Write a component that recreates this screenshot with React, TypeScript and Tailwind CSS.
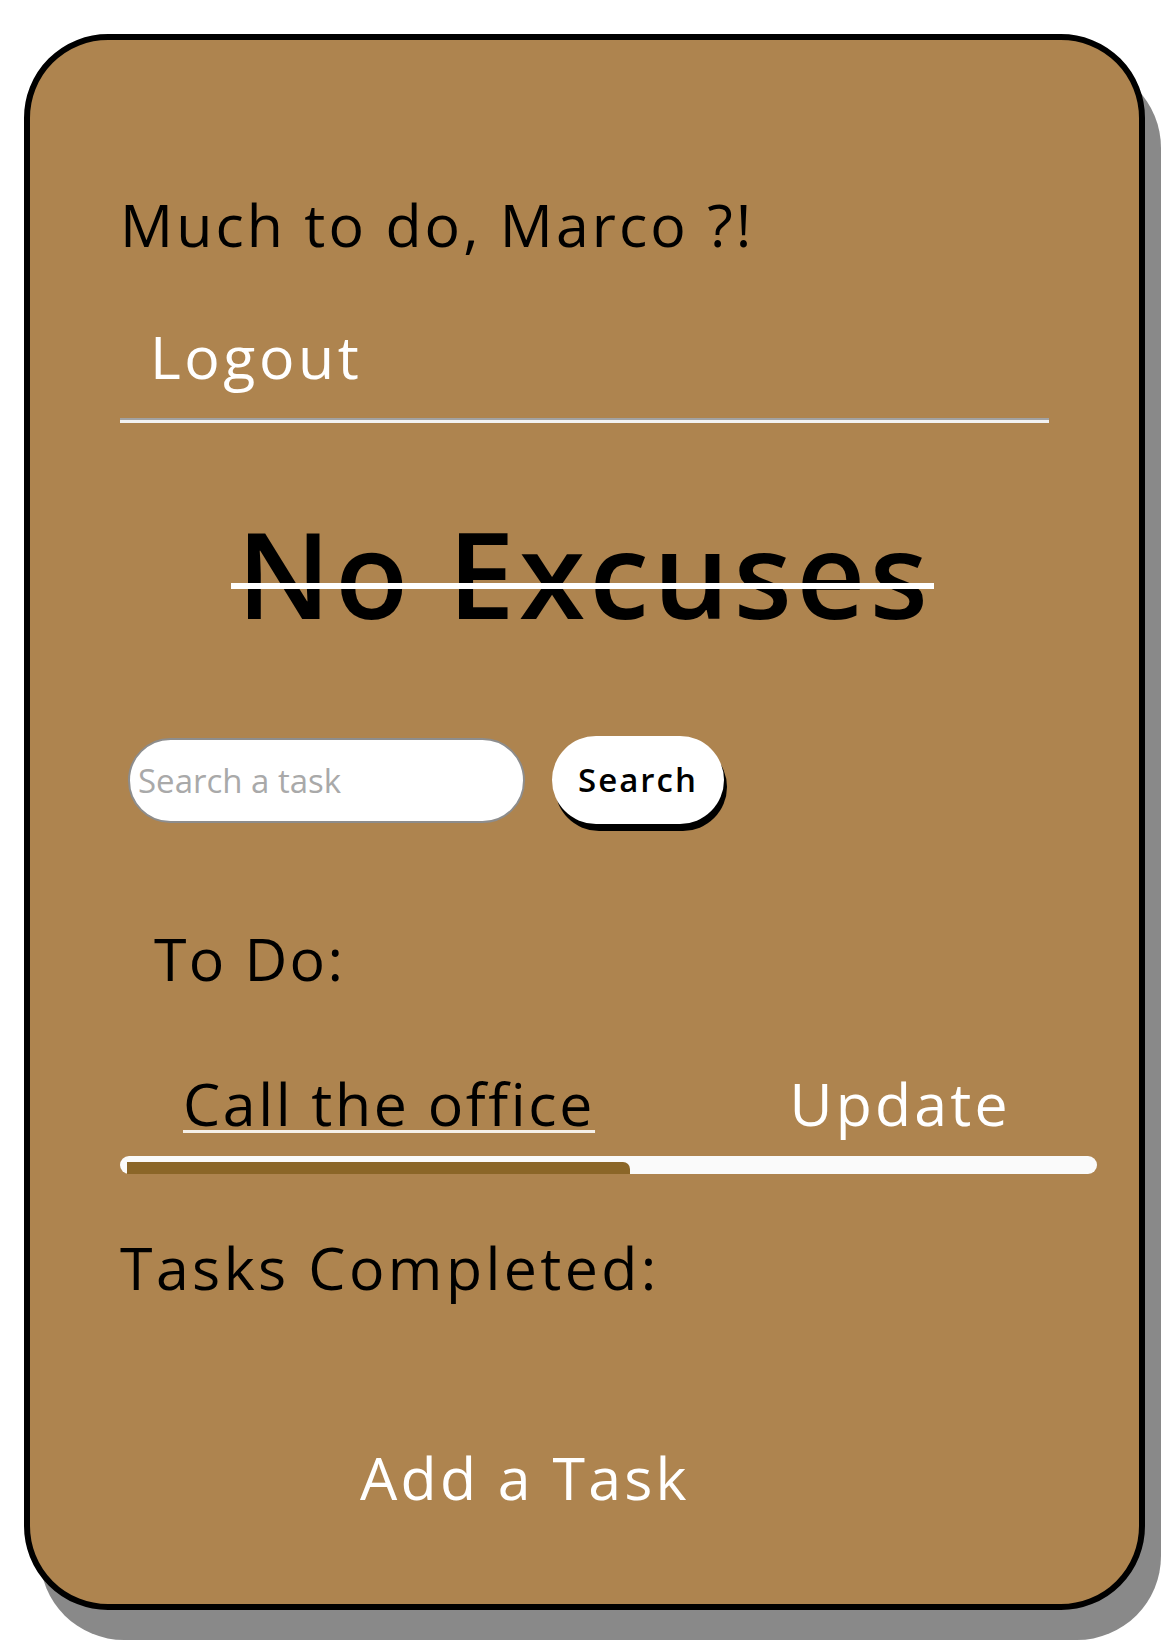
import React from 'react';

export default function App() {
  return (
    <div className="min-h-[1647px] w-[1170px] bg-white pt-[34px] pl-[24px] font-['Open_Sans',sans-serif]">
      <div className="box-border flex h-[1576px] w-[1121px] flex-col rounded-[84px] border-[6px] border-black bg-[#ae844f] pt-[155px] pl-[90px] pr-[90px] shadow-[16px_30px_0_#898989]">
        <h2 className="text-[59px] font-normal leading-none tracking-[0.052em] text-black">Much to do, Marco ?!</h2>

        <button className="mt-[73px] self-start pl-[30px] text-[59px] leading-none tracking-[0.06em] text-white">Logout</button>

        <div className="mt-[32px] border-t-2 border-b-[3px] border-t-[#a2a2a2] border-b-[#f2f2f2]" />

        {/* strike line sits a bit lower than the browser's line-through */}
        <h1 className="mt-[90px] text-center text-[120px] font-semibold leading-none tracking-[0.035em] text-black">
          <span className="relative inline-block">
            No Excuses
            <span className="absolute -left-[6px] -right-[2px] top-[70px] h-[6px] bg-white" />
          </span>
        </h1>

        <form className="mt-[103px] flex items-center gap-[27px] pl-[8px]" onSubmit={(e) => e.preventDefault()}>
          <input
            type="text"
            placeholder="Search a task"
            className="h-[85px] w-[397px] rounded-full border-2 border-[#8d8d8d] bg-white px-[8px] text-[33px] text-black outline-none placeholder:text-[#a9a9a9]"
          />
          <button className="h-[88px] w-[172px] rounded-full bg-white text-[33px] font-semibold tracking-[0.06em] text-black shadow-[3px_7px_0_#000]">
            Search
          </button>
        </form>

        <h3 className="mt-[105px] pl-[34px] text-[59px] font-normal leading-none tracking-[0.04em] text-black">To Do:</h3>

        <div className="mt-[86px] flex items-center pl-[63px]">
          <a href="#" className="text-[59px] leading-none tracking-[0.045em] text-black underline decoration-[#f5f0e8] decoration-[3px] underline-offset-[4px]">
            Call the office
          </a>
          <button className="ml-auto mr-[38px] text-[59px] leading-none tracking-[0.055em] text-white">Update</button>
        </div>

        <div className="relative mt-[23px] h-[18px] w-[977px] rounded-full bg-[#fafafa]">
          <div className="absolute bottom-0 left-[7px] h-[12px] w-[503px] rounded-tr-[7px] bg-[#8b6628]" />
        </div>

        <h3 className="mt-[64px] text-[59px] font-normal leading-none tracking-[0.058em] text-black">Tasks Completed:</h3>

        <button className="mt-[151px] ml-[240px] self-start text-[59px] leading-none tracking-[0.055em] text-white">Add a Task</button>
      </div>
    </div>
  );
}
